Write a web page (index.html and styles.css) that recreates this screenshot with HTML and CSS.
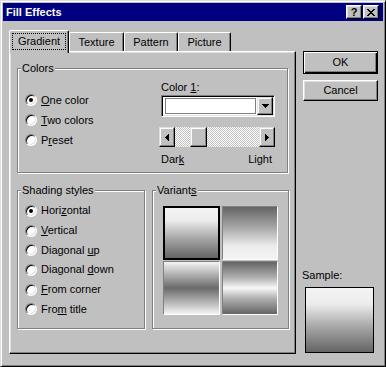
FILE: index.html
```html
<!DOCTYPE html>
<html>
<head>
<meta charset="utf-8">
<title>Fill Effects</title>
<link rel="stylesheet" href="styles.css">
</head>
<body>
<div class="window">
  <div class="titlebar">
    <span class="title">Fill Effects</span>
    <div class="tb-buttons">
      <span class="tb-btn help">?</span>
      <span class="tb-btn close"><svg width="8" height="7" viewBox="0 0 8 7" shape-rendering="crispEdges"><path d="M0 0h2v1H0zM6 0h2v1H6zM1 1h2v1H1zM5 1h2v1H5zM2 2h4v1H2zM3 3h2v1H3zM2 4h4v1H2zM1 5h2v1H1zM5 5h2v1H5zM0 6h2v1H0zM6 6h2v1H6z" fill="#000"/></svg></span>
    </div>
  </div>
  <div class="body">
    <div class="tabs-col">
      <div class="tabstrip">
        <div class="tab sel"><span class="focus">Gradient</span></div>
        <div class="tab t-texture">Texture</div>
        <div class="tab t-pattern">Pattern</div>
        <div class="tab t-picture">Picture</div>
      </div>
      <div class="panel">
        <fieldset class="grp colors">
          <legend>Colors</legend>
          <div class="colors-inner">
            <div class="radios colors-radios">
              <div class="opt"><span class="radio on"></span><span><u>O</u>ne color</span></div>
              <div class="opt"><span class="radio"></span><span><u>T</u>wo colors</span></div>
              <div class="opt"><span class="radio"></span><span>P<u>r</u>eset</span></div>
            </div>
            <div class="color-ctl">
              <div class="lbl">Color <u>1</u>:</div>
              <div class="combo">
                <span class="swatch"></span>
                <span class="drop"><svg width="7" height="4" viewBox="0 0 7 4" shape-rendering="crispEdges"><path d="M0 0h7v1H0zM1 1h5v1H1zM2 2h3v1H2zM3 3h1v1H3z" fill="#000"/></svg></span>
              </div>
              <div class="scroll">
                <span class="sbtn"><svg width="4" height="7" viewBox="0 0 4 7" shape-rendering="crispEdges"><path d="M3 0h1v7H3zM2 1h1v5H2zM1 2h1v3H1zM0 3h1v1H0z" fill="#000"/></svg></span>
                <span class="track"><span class="thumb"></span></span>
                <span class="sbtn"><svg width="4" height="7" viewBox="0 0 4 7" shape-rendering="crispEdges"><path d="M0 0h1v7H0zM1 1h1v5H1zM2 2h1v3H2zM3 3h1v1H3z" fill="#000"/></svg></span>
              </div>
              <div class="dl"><span>Dar<u>k</u></span><span>Light</span></div>
            </div>
          </div>
        </fieldset>
        <div class="row2">
          <fieldset class="grp shading">
            <legend>Shading styles</legend>
            <div class="radios shade-radios">
              <div class="opt"><span class="radio on"></span><span>Hori<u>z</u>ontal</span></div>
              <div class="opt"><span class="radio"></span><span><u>V</u>ertical</span></div>
              <div class="opt"><span class="radio"></span><span>Diagonal <u>u</u>p</span></div>
              <div class="opt"><span class="radio"></span><span>Diagonal <u>d</u>own</span></div>
              <div class="opt"><span class="radio"></span><span><u>F</u>rom corner</span></div>
              <div class="opt"><span class="radio"></span><span>Fro<u>m</u> title</span></div>
            </div>
          </fieldset>
          <fieldset class="grp variants">
            <legend>Variant<u>s</u></legend>
            <div class="tiles">
              <div class="tile v1 selected"></div>
              <div class="tile v2"></div>
              <div class="tile v3"></div>
              <div class="tile v4"></div>
            </div>
          </fieldset>
        </div>
      </div>
    </div>
    <div class="side">
      <div class="btn default">OK</div>
      <div class="btn cancel">Cancel</div>
      <div class="sample-lbl">Sample:</div>
      <div class="sample"></div>
    </div>
  </div>
</div>
</body>
</html>
```

FILE: styles.css
```css
* { box-sizing: border-box; }
html, body { margin: 0; padding: 0; }
body {
  font-family: "Liberation Sans", Arial, sans-serif;
  font-size: 11px;
  line-height: 13px;
  color: #000;
  background: #c0c0c0;
}
u { text-decoration: underline; text-underline-offset: 1px; }

.window {
  width: 386px;
  height: 367px;
  border: 1px solid;
  border-color: #dfdfdf #000 #000 #dfdfdf;
  box-shadow: inset 1px 1px #fff, inset -1px -1px #808080;
  padding: 2px;
  background: #c0c0c0;
}

.titlebar {
  height: 18px;
  background: #000080;
  color: #fff;
  font-weight: bold;
  display: flex;
  align-items: center;
  padding-left: 3px;
}
.tb-buttons {
  margin-left: auto;
  margin-right: 4px;
  display: flex;
  gap: 1px;
}
.tb-btn {
  width: 16px;
  height: 14px;
  background: #c0c0c0;
  border: 1px solid;
  border-color: #fff #000 #000 #fff;
  box-shadow: inset -1px -1px #808080, inset 1px 1px #dfdfdf;
  color: #000;
  display: flex;
  align-items: center;
  justify-content: center;
  font-weight: bold;
  font-size: 11px;
  line-height: 11px;
}
.tb-btn svg { display: block; }

.body {
  display: flex;
  padding: 9px 0 0 6px;
}
.tabs-col { width: 287px; }

.tabstrip {
  display: flex;
  align-items: flex-end;
}
.tab {
  height: 19px;
  border-top: 1px solid #fff;
  border-left: 1px solid #fff;
  border-right: 1px solid #000;
  box-shadow: inset -1px 0 #808080;
  border-top-left-radius: 2px;
  border-top-right-radius: 2px;
  display: flex;
  justify-content: center;
  padding-top: 3px;
}
.tab.sel {
  width: 60px;
  height: 23px;
  margin-bottom: -2px;
  position: relative;
  z-index: 1;
  background: #c0c0c0;
  padding-top: 3px;
}
.focus {
  padding: 1px 5px;
  outline: 1px dotted #000;
  height: 15px;
}
.t-texture { width: 55px; margin-left: 0; }
.t-pattern { width: 54px; }
.t-picture { width: 53px; }

.panel {
  height: 303px;
  border: 1px solid;
  border-color: #fff #000 #000 #fff;
  box-shadow: inset -1px -1px #808080, inset 1px 1px #dfdfdf;
  padding: 10px 0 0 7px;
}

.grp {
  margin: 0;
  padding: 0;
  min-width: 0;
  border: 1px solid #808080;
  box-shadow: inset 1px 1px #fff, 1px 1px #fff;
}
.grp legend {
  margin-left: 3px;
  padding: 0 1px;
  line-height: 13px;
  background: #c0c0c0;
}
.colors { width: 271px; height: 111px; }
.colors-inner { display: flex; }

.radios { padding-left: 7px; }
.colors-radios { width: 141px; margin-top: 15px; }
.opt {
  display: flex;
  align-items: center;
  height: 20px;
}
.shade-radios { padding-top: 4px; }
.shade-radios .opt { height: 19.7px; }
.radio {
  width: 12px;
  height: 12px;
  border-radius: 50%;
  border: 1px solid;
  border-color: #808080 #fff #fff #808080;
  box-shadow: inset 1px 1px #000, inset -1px -1px #dfdfdf;
  background: #fff;
  margin-right: 4px;
  display: flex;
  align-items: center;
  justify-content: center;
  flex: none;
}
.radio.on::after {
  content: "";
  width: 4px;
  height: 4px;
  border-radius: 50%;
  background: #000;
}

.color-ctl { width: 116px; margin-top: 6px; }
.lbl { padding-left: 2px; height: 13px; }
.combo {
  margin: 1px 0 0 2px;
  width: 114px;
  height: 22px;
  border: 1px solid;
  border-color: #808080 #fff #fff #808080;
  box-shadow: inset 1px 1px #000, inset -1px -1px #dfdfdf;
  background: #fff;
  display: flex;
  align-items: center;
  padding: 1px;
}
.swatch {
  width: 91px;
  height: 16px;
  border: 1px solid #808080;
  background: #fff;
  margin-left: 2px;
}
.drop {
  margin-left: auto;
  width: 16px;
  height: 18px;
  background: #c0c0c0;
  border: 1px solid;
  border-color: #dfdfdf #000 #000 #dfdfdf;
  box-shadow: inset -1px -1px #808080, inset 1px 1px #fff;
  display: flex;
  align-items: center;
  justify-content: center;
}
.drop svg, .sbtn svg { display: block; }

.scroll {
  margin-top: 10px;
  display: flex;
  height: 20px;
  width: 116px;
}
.sbtn, .thumb {
  width: 16px;
  height: 20px;
  background: #c0c0c0;
  border: 1px solid;
  border-color: #dfdfdf #000 #000 #dfdfdf;
  box-shadow: inset -1px -1px #808080, inset 1px 1px #fff;
  display: flex;
  align-items: center;
  justify-content: center;
  flex: none;
}
.track {
  flex: 1;
  display: flex;
  background: repeating-conic-gradient(#fff 0% 25%, #c0c0c0 0% 50%) 0 0 / 2px 2px;
}
.thumb { margin-left: 15px; width: 17px; }

.dl {
  margin-top: 6px;
  display: flex;
  justify-content: space-between;
  padding: 0 3px 0 2px;
}

.row2 {
  display: flex;
  gap: 7px;
  margin-top: 11px;
}
.shading { width: 128px; height: 145px; }
.variants { width: 137px; height: 145px; }

.tiles {
  display: grid;
  grid-template-columns: 57px 56px;
  grid-template-rows: 54px 54px;
  column-gap: 2px;
  row-gap: 1px;
  padding: 9px 0 0 10px;
}
.tile {
  border: 1px solid;
  border-color: #808080 #fff #fff #808080;
}
.tile.selected {
  border: 2px solid #000;
}
.v1, .sample {
  background: linear-gradient(#f4f4f4 0%, #ececec 25%, #a8a8a8 60%, #646464 100%);
}
.v2 {
  background: linear-gradient(#646464 0%, #a8a8a8 40%, #ececec 75%, #f4f4f4 100%);
}
.v3 {
  background: linear-gradient(#f4f4f4 0%, #a0a0a0 30%, #6a6a6a 50%, #a0a0a0 70%, #f4f4f4 100%);
}
.v4 {
  background: linear-gradient(#646464 0%, #b0b0b0 30%, #f8f8f8 50%, #b0b0b0 70%, #646464 100%);
}

.side {
  width: 75px;
  margin-left: 7px;
  padding-top: 21px;
}
.btn {
  height: 23px;
  width: 75px;
  background: #c0c0c0;
  border: 1px solid;
  border-color: #fff #000 #000 #fff;
  box-shadow: inset -1px -1px #808080, inset 1px 1px #dfdfdf;
  display: flex;
  align-items: center;
  justify-content: center;
}
.btn.default {
  border: 1px solid #000;
  box-shadow: inset 1px 1px #fff, inset -1px -1px #000, inset -2px -2px #808080;
}
.btn.cancel { margin-top: 6px; height: 21px; }
.sample-lbl {
  margin-top: 168px;
  padding-left: 0;
  margin-left: -1px;
  height: 13px;
}
.sample {
  margin: 5px 0 0 2px;
  width: 69px;
  height: 66px;
  border: 1px solid #000;
}
```
